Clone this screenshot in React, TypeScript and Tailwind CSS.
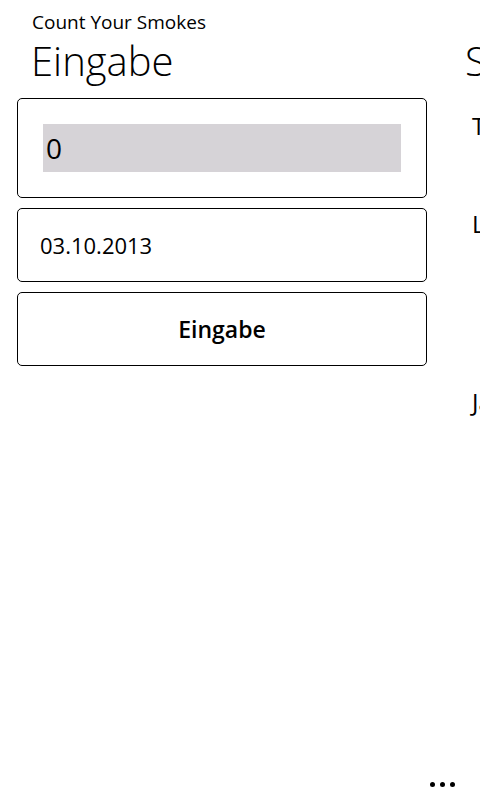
export default function App() {
  return (
    <div className="relative w-[480px] h-[800px] overflow-hidden bg-white text-black font-['Open_Sans','Noto_Sans',sans-serif]">
      <div className="pl-[32px] pt-[10px] text-[19px] leading-[24px]">Count Your Smokes</div>

      <div className="flex">
        {/* Eingabe panel */}
        <section className="w-[433px] shrink-0">
          <h1 className="pl-[31px] text-[40px] font-light leading-[50px] mt-[2px] mb-[12px]">Eingabe</h1>
          <div className="pl-[17px] flex flex-col gap-[10px] w-[427px]">
            <div className="h-[100px] rounded-[5px] border border-black p-[25px]">
              <div className="h-[48px] bg-[#d6d3d7] pl-[3px] text-[28px] leading-[48px]">0</div>
            </div>
            <div className="h-[74px] rounded-[5px] border border-black pl-[22px] flex items-center text-[22px]">
              03.10.2013
            </div>
            <button className="h-[74px] rounded-[5px] border border-black text-[23px] font-semibold">
              Eingabe
            </button>
          </div>
        </section>

        {/* Statistik panel */}
        <section className="shrink-0 w-[440px]">
          <h1 className="pl-[32px] text-[40px] font-light leading-[50px] mt-[2px]">Statistik</h1>
          <div className="pl-[39px] text-[24px] leading-[32px] flex flex-col">
            <div className="mt-[24px]">Tagesdurchschnitt</div>
            <div className="mt-[66px]">Letzte Woche</div>
            <div className="mt-[146px]">Jahr</div>
          </div>
        </section>
      </div>

      <div className="absolute bottom-[13px] right-[25px] flex gap-[5px]">
        <span className="w-[5px] h-[5px] rounded-full bg-black" />
        <span className="w-[5px] h-[5px] rounded-full bg-black" />
        <span className="w-[5px] h-[5px] rounded-full bg-black" />
      </div>
    </div>
  )
}
